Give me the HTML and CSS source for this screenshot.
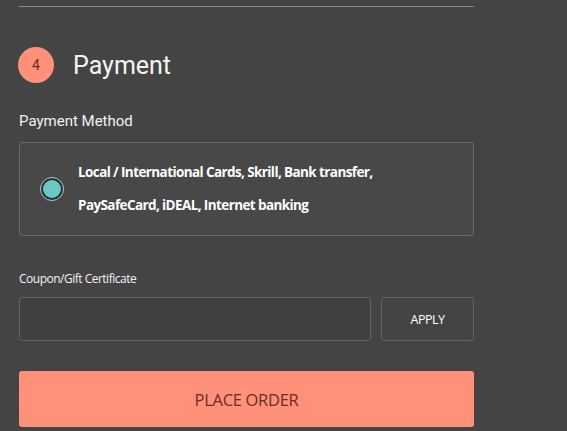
FILE: index.html
```html
<!DOCTYPE html>
<html>

<head>
  <link rel="stylesheet" href="styles.css">
</head>

<body>
  <div class="checkout">
    <hr class="divider">

    <div class="step-head">
      <span class="step-num">4</span>
      <h2 class="step-title">Payment</h2>
    </div>

    <div class="field-label">Payment Method</div>

    <label class="method-card">
      <span class="radio"><span class="radio-dot"></span></span>
      <span class="method-text">Local / International Cards, Skrill, Bank transfer,<br>PaySafeCard, iDEAL, Internet banking</span>
    </label>

    <div class="coupon-label">Coupon/Gift Certificate</div>
    <div class="coupon-row">
      <input class="coupon-input" type="text">
      <button class="apply-btn">APPLY</button>
    </div>

    <button class="order-btn">PLACE ORDER</button>
  </div>
</body>

</html>
```
FILE: styles.css
```css
body {
  margin: 0;
  overflow: hidden;
  background-color: #444444;
  font-family: Roboto, "Liberation Sans", sans-serif;
  color: #f2f2f2;
}

.checkout {
  width: 455px;
  padding: 6px 0 0 19px;
}

.divider {
  margin: 0;
  border: 0;
  border-top: 1px solid #8a8a8a;
}

.step-head {
  display: flex;
  align-items: center;
  margin-top: 40px;
}

.step-num {
  width: 36px;
  height: 36px;
  border-radius: 50%;
  background-color: #ff917b;
  color: #6b2a20;
  font-size: 14px;
  display: flex;
  align-items: center;
  justify-content: center;
  margin-left: -1px;
}

.step-title {
  margin: 0 0 0 19px;
  font-size: 25px;
  font-weight: 400;
  color: #f4f4f4;
}

.field-label {
  margin-top: 29px;
  font-size: 15px;
}

.method-card {
  display: flex;
  align-items: center;
  margin-top: 12px;
  border: 1px solid #6a6a6a;
  border-radius: 3px;
  background-color: #484848;
  box-sizing: border-box;
  height: 94px;
}

.radio {
  width: 24px;
  height: 24px;
  border-radius: 50%;
  box-sizing: border-box;
  border: 1px solid #b9c9c9;
  background-color: #1f3236;
  display: flex;
  align-items: center;
  justify-content: center;
  margin-left: 20px;
}

.radio-dot {
  width: 18px;
  height: 18px;
  border-radius: 50%;
  background-color: #6fc4c6;
}

.method-text {
  margin-left: 14px;
  font-family: "Open Sans", sans-serif;
  font-weight: 700;
  font-size: 13.5px;
  line-height: 33px;
  letter-spacing: -0.6px;
  color: #ffffff;
}

.coupon-label {
  margin-top: 34px;
  font-family: "Open Sans", sans-serif;
  font-size: 12px;
  letter-spacing: -0.5px;
}

.coupon-row {
  display: flex;
  gap: 10px;
  margin-top: 10px;
}

.coupon-input {
  width: 352px;
  height: 44px;
  box-sizing: border-box;
  border: 1px solid #626262;
  border-radius: 3px;
  background-color: #404040;
  outline: none;
}

.apply-btn {
  flex: 1;
  height: 44px;
  border: 1px solid #626262;
  border-radius: 3px;
  background-color: #444444;
  color: #ffffff;
  font-family: "Open Sans", sans-serif;
  font-size: 12.5px;
  letter-spacing: -0.5px;
}

.order-btn {
  display: block;
  width: 100%;
  height: 56px;
  margin-top: 30px;
  border: 0;
  border-radius: 3px;
  background-color: #ff917b;
  color: #6b2d22;
  font-family: "Open Sans", sans-serif;
  font-size: 16.5px;
  letter-spacing: -0.3px;
}
```
